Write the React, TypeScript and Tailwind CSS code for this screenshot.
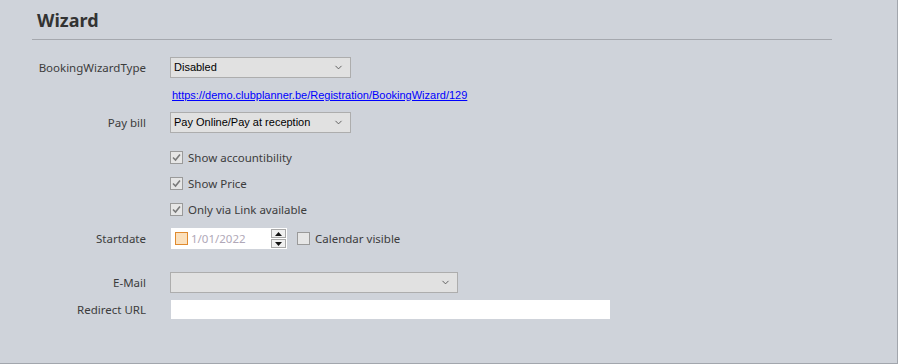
import { ChevronDown } from "lucide-react";

const labelCls = "w-[148px] shrink-0 pr-[2px] text-right text-[11.5px] text-[#3c3c3c] [font-family:'Noto_Sans',sans-serif]";
const winCls = "[font-family:'Liberation_Sans',Arial,sans-serif] text-[11px] text-black";

const Combo = ({ value, width }: { value: string; width: string }) => (
  <div className={`flex h-[21px] items-center justify-between border border-[#adadad] bg-[#e1e1e1] pl-[3px] pr-[6px] ${width} ${winCls}`}>
    <span>{value}</span>
    <ChevronDown className="h-[11px] w-[11px] text-[#555]" strokeWidth={2} />
  </div>
);

const Check = ({ checked }: { checked?: boolean }) => (
  <span className="flex h-[13px] w-[13px] items-center justify-center border border-[#9a9a9a] bg-[#e6e6e6]">
    {checked && (
      <svg width="9" height="9" viewBox="0 0 9 9">
        <path d="M1 4.5 L3.5 7 L8 1.5" fill="none" stroke="#7a7a7a" strokeWidth="1.6" />
      </svg>
    )}
  </span>
);

const CheckRow = ({ text }: { text: string }) => (
  <div className="flex h-[13px] items-center gap-[5px] pl-[170px]">
    <Check checked />
    <span className="text-[11.5px] text-[#3c3c3c] [font-family:'Noto_Sans',sans-serif]">{text}</span>
  </div>
);

export default function App() {
  return (
    <div className="h-[364px] w-[898px] overflow-hidden border-r border-b border-[#a2a6ad] bg-[#cfd3da]">
      <div className="ml-[32px] w-[800px] border-b border-[#a5a8ae] pb-[6px] pt-[7px]">
        <h1 className="pl-[5px] text-[18px] font-bold leading-[26px] text-[#333] [font-family:'Noto_Sans',sans-serif]">Wizard</h1>
      </div>

      <div className="flex flex-col">
        <div className="mt-[17px] flex items-center gap-[22px]">
          <span className={labelCls}>BookingWizardType</span>
          <Combo value="Disabled" width="w-[181px]" />
        </div>

        <div className="mt-[8px] h-[14px] pl-[172px] leading-[14px]">
          <a href="#" className={`leading-[14px] underline ${winCls} !text-[#0000ff]`}>
            https://demo.clubplanner.be/Registration/BookingWizard/129
          </a>
        </div>

        <div className="mt-[12px] flex items-center gap-[22px]">
          <span className={labelCls}>Pay bill</span>
          <Combo value="Pay Online/Pay at reception" width="w-[181px]" />
        </div>

        <div className="mt-[18px] flex flex-col gap-[13px]">
          <CheckRow text="Show accountibility" />
          <CheckRow text="Show Price" />
          <CheckRow text="Only via Link available" />
        </div>

        <div className="mt-[12px] flex items-center gap-[23px]">
          <span className={labelCls}>Startdate</span>
          <div className="flex items-center gap-[10px]">
            <div className="flex h-[21px] w-[116px] items-center bg-white pl-[4px] pr-[1px]">
              <span className="h-[13px] w-[13px] border border-[#e08a2e] bg-[#fbe0bc]" />
              <span className="ml-[3px] flex-1 text-[11.5px] text-[#b0a8b8] [font-family:'Noto_Sans',sans-serif]">1/01/2022</span>
              <div className="flex flex-col gap-[1px]">
                <span className="flex h-[9px] w-[15px] items-center justify-center border border-[#a8a8a8] bg-[#f0f0f0]">
                  <svg width="7" height="4" viewBox="0 0 7 4"><path d="M3.5 0 L7 4 L0 4 Z" fill="#111" /></svg>
                </span>
                <span className="flex h-[9px] w-[15px] items-center justify-center border border-[#a8a8a8] bg-[#f0f0f0]">
                  <svg width="7" height="4" viewBox="0 0 7 4"><path d="M0 0 L7 0 L3.5 4 Z" fill="#111" /></svg>
                </span>
              </div>
            </div>
            <div className="flex items-center gap-[5px]">
              <Check />
              <span className="text-[11.5px] text-[#3c3c3c] [font-family:'Noto_Sans',sans-serif]">Calendar visible</span>
            </div>
          </div>
        </div>

        <div className="mt-[23px] flex items-center gap-[22px]">
          <span className={labelCls}>E-Mail</span>
          <Combo value="" width="w-[288px]" />
        </div>

        <div className="mt-[7px] flex items-center gap-[23px]">
          <span className={labelCls}>Redirect URL</span>
          <div className="h-[19px] w-[439px] bg-white" />
        </div>
      </div>
    </div>
  );
}
